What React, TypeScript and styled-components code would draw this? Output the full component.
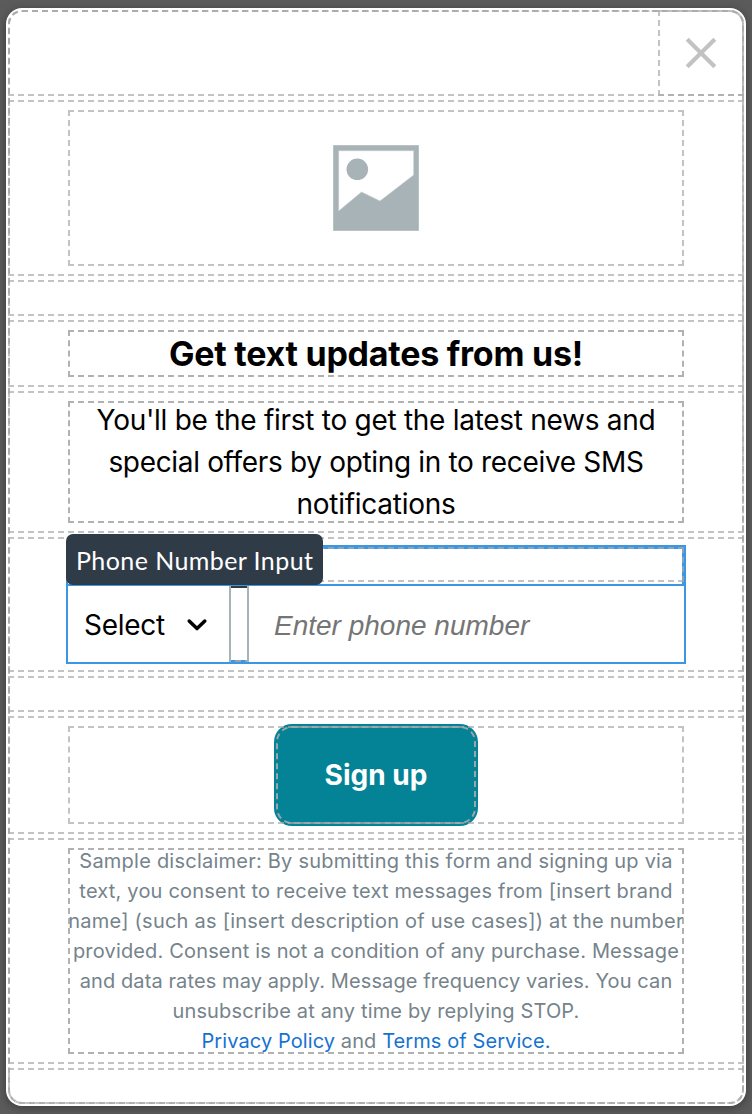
import React from 'react';
import styled, { createGlobalStyle, css } from 'styled-components';

const GUIDE = 'rgba(170, 170, 170, 0.7)';
const GUIDE_STRONG = 'rgba(170, 170, 170, 0.91)';
const BLUE = '#3b97e3';

const GlobalStyle = createGlobalStyle`
  *, *::before, *::after { box-sizing: border-box; }
  body {
    margin: 0;
    background: #5b5b5b;
    font-family: Inter, "Liberation Sans", sans-serif;
    color: #000;
  }
`;

const guide = css<{ $strong?: boolean }>`
  outline: 2px dashed ${(p) => (p.$strong ? GUIDE_STRONG : GUIDE)};
  outline-offset: -4px;
`;

const Page = styled.main`
  height: 1114px;
  padding: 8px 6px;
  overflow: hidden;
`;

const Card = styled.section`
  ${guide}
  display: flex;
  flex-direction: column;
  height: 1098px;
  background: #fff;
  border-radius: 16px;
  box-shadow: 0 2px 10px rgba(0, 0, 0, 0.35);
`;

const Row = styled.div<{ $height: number; $edge?: 'top' | 'bottom' }>`
  ${guide}
  flex: none;
  height: ${(p) => p.$height}px;
  padding: 10px 60px;
  border-radius: ${(p) =>
    p.$edge === 'top' ? '16px 16px 0 0' : p.$edge === 'bottom' ? '0 0 16px 16px' : '0'};
`;

const HeaderRow = styled(Row)`
  display: flex;
  justify-content: flex-end;
  padding: 0;
`;

const CloseButton = styled.button`
  ${guide}
  display: grid;
  place-items: center;
  width: 90px;
  height: 90px;
  padding: 0;
  border: 0;
  border-radius: 0 16px 0 0;
  background: transparent;
`;

const ImageSlot = styled.div`
  ${guide}
  display: grid;
  place-items: center;
  height: 160px;
`;

const Heading = styled.h1`
  ${guide}
  height: 51px;
  margin: 0;
  font-size: 34px;
  font-weight: 700;
  line-height: 51px;
  letter-spacing: -0.25px;
  text-align: center;
  white-space: nowrap;
`;

const Copy = styled.p`
  ${guide}
  margin: 0;
  font-size: 28px;
  line-height: 42px;
  text-align: center;
  white-space: nowrap;
`;

const Line = styled.span<{ $tracking: number }>`
  display: block;
  letter-spacing: ${(p) => p.$tracking}px;
`;

const PhoneField = styled.div`
  position: relative;
  height: 119px;
`;

const FieldLabel = styled.div`
  ${guide}
  height: 39px;
  border: 4px solid ${BLUE};
  border-bottom: 0;
  border-left-width: 2px;
`;

const Tag = styled.span`
  position: absolute;
  z-index: 2;
  top: -11px;
  left: 0;
  width: 257px;
  height: 51px;
  padding-left: 10px;
  border-radius: 7px;
  background: #2f3c48;
  color: #fff;
  font-family: Lato, sans-serif;
  font-size: 25px;
  line-height: 53px;
  letter-spacing: 0.42px;
  white-space: nowrap;
`;

const InputRow = styled.div`
  display: flex;
  height: 80px;
  border: 2px solid ${BLUE};
`;

const CountrySelect = styled.div`
  display: flex;
  align-items: center;
  gap: 21px;
  width: 161px;
  padding: 2px 0 0 16px;
  font-size: 28px;
  letter-spacing: -0.3px;
`;

const Divider = styled.div`
  width: 20px;
  border: solid #a8b3b7;
  border-width: 0 2px;
  display: flex;
  flex-direction: column;
  justify-content: space-between;

  &::before {
    content: '';
    height: 2px;
    background: #2f3c48;
  }

  &::after {
    content: '';
    height: 2px;
    background: repeating-linear-gradient(90deg, ${BLUE} 0 4px, #9aa3aa 4px 10px);
  }
`;

const PhoneInput = styled.input`
  flex: 1;
  min-width: 0;
  padding: 3px 0 0 25px;
  border: 0;
  outline: 0;
  background: transparent;
  font: italic 28px 'Liberation Sans', Arial, sans-serif;

  &::placeholder {
    color: #757575;
    opacity: 1;
  }
`;

const ButtonSlot = styled.div`
  ${guide}
  display: flex;
  justify-content: center;
  height: 102px;
`;

const SubmitButton = styled.button`
  ${guide}
  width: 204px;
  height: 102px;
  padding: 0;
  border: 0;
  border-radius: 18px;
  background: #048296;
  color: #fff;
  font: 700 28px Inter, sans-serif;
`;

const Disclaimer = styled.p`
  ${guide}
  margin: 0;
  color: #75838b;
  font-size: 20px;
  line-height: 30px;
  text-align: center;
  white-space: nowrap;
`;

const Link = styled.a`
  color: #1672d0;
`;

export default function App() {
  return (
    <Page>
      <GlobalStyle />
      <Card $strong>
        <HeaderRow $height={90} $edge="top">
          <CloseButton aria-label="Close">
            <svg width="32" height="32" viewBox="0 0 32 32" stroke="#c2c2c2" strokeWidth="4.2">
              <path d="M2.2 2.2 29.8 29.8M29.8 2.2 2.2 29.8" />
            </svg>
          </CloseButton>
        </HeaderRow>
        <Row $height={180}>
          <ImageSlot>
            <svg width="86" height="86" viewBox="0 0 86 86">
              <path fill="#a8b3b7" stroke="#b8c2c5" d="M.5.5h85v85H.5z" />
              <path fill="#fff" stroke="#c3cbce" strokeWidth=".6" d="M5.7 5.7h75v24.3L47 56 28.5 47 5.7 66z" />
              <circle cx="24.3" cy="24.3" r="10.8" fill="#a8b3b7" />
            </svg>
          </ImageSlot>
        </Row>
        <Row $height={40} />
        <Row $height={71}>
          <Heading $strong>Get text updates from us!</Heading>
        </Row>
        <Row $height={146}>
          <Copy $strong>
            <Line $tracking={-0.28}>You'll be the first to get the latest news and</Line>
            <Line $tracking={-0.33}>special offers by opting in to receive SMS</Line>
            <Line $tracking={-0.28}>notifications</Line>
          </Copy>
        </Row>
        <Row $height={139}>
          <PhoneField>
            <Tag>Phone Number Input</Tag>
            <FieldLabel />
            <InputRow>
              <CountrySelect>
                Select
                <svg width="22" height="14" viewBox="0 0 22 14" fill="none" stroke="#000" strokeWidth="3.5" strokeLinecap="round" strokeLinejoin="round">
                  <path d="M3.2 3l7.8 7.6L18.8 3" />
                </svg>
              </CountrySelect>
              <Divider />
              <PhoneInput placeholder="Enter phone number" />
            </InputRow>
          </PhoneField>
        </Row>
        <Row $height={40} />
        <Row $height={122}>
          <ButtonSlot>
            <SubmitButton $strong>Sign up</SubmitButton>
          </ButtonSlot>
        </Row>
        <Row $height={230}>
          <Disclaimer $strong>
            <Line $tracking={0.23}>Sample disclaimer: By submitting this form and signing up via</Line>
            <Line $tracking={0.2}>text, you consent to receive text messages from [insert brand</Line>
            <Line $tracking={0.23}>name] (such as [insert description of use cases]) at the number</Line>
            <Line $tracking={0.16}>provided. Consent is not a condition of any purchase. Message</Line>
            <Line $tracking={0.1}>and data rates may apply. Message frequency varies. You can</Line>
            <Line $tracking={0.16}>unsubscribe at any time by replying STOP.</Line>
            <Line $tracking={0.09}>
              <Link>Privacy Policy</Link> and <Link>Terms of Service.</Link>
            </Line>
          </Disclaimer>
        </Row>
        <Row $height={40} $edge="bottom" />
      </Card>
    </Page>
  );
}
